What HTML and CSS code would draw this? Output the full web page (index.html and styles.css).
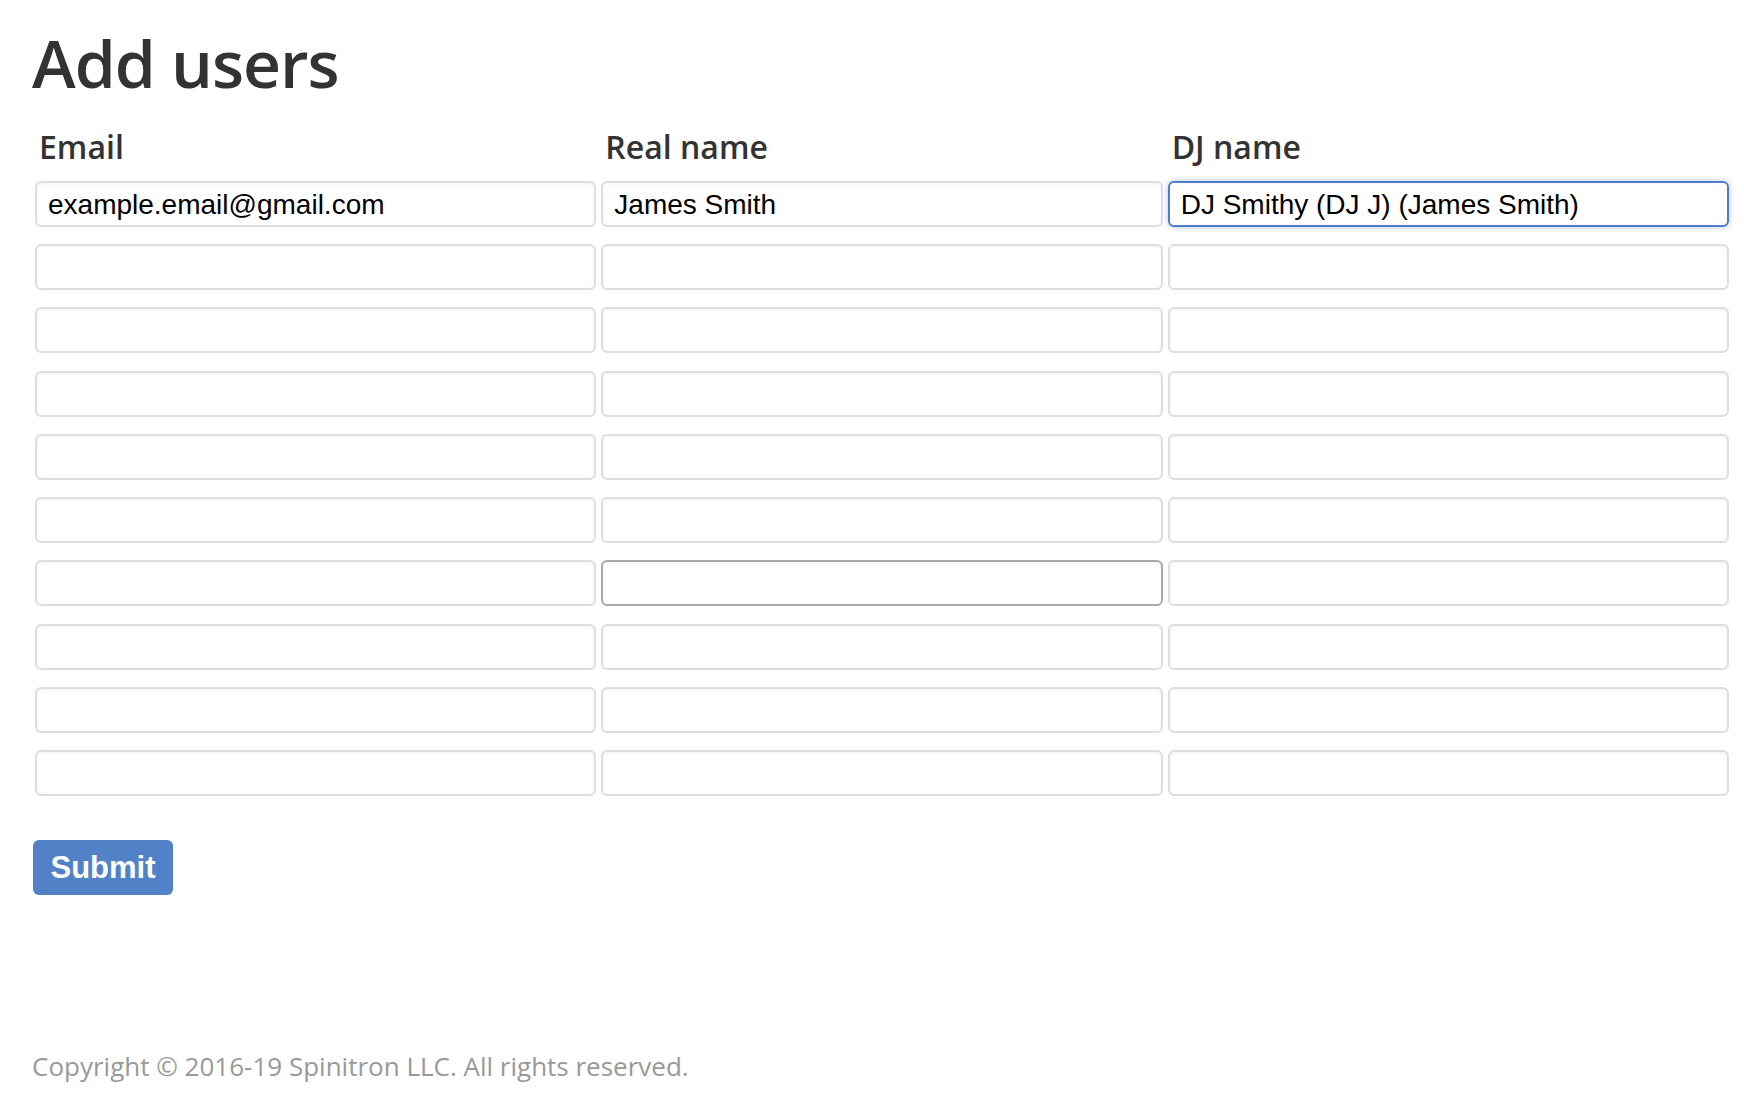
FILE: index.html
```html
<!DOCTYPE html>
<html lang="en">
<head>
<meta charset="utf-8">
<title>Add users</title>
<link rel="stylesheet" href="styles.css">
</head>
<body>
<main class="page">
  <h1 class="title">Add users</h1>
  <form class="user-form">
    <div class="grid">
      <label class="col-label">Email</label>
      <label class="col-label">Real name</label>
      <label class="col-label">DJ name</label>

      <input class="field" type="text" value="example.email@gmail.com">
      <input class="field" type="text" value="James Smith">
      <input class="field is-focused" type="text" value="DJ Smithy (DJ J) (James Smith)">

      <input class="field" type="text"><input class="field" type="text"><input class="field" type="text">
      <input class="field" type="text"><input class="field" type="text"><input class="field" type="text">
      <input class="field" type="text"><input class="field" type="text"><input class="field" type="text">
      <input class="field" type="text"><input class="field" type="text"><input class="field" type="text">
      <input class="field" type="text"><input class="field" type="text"><input class="field" type="text">
      <input class="field" type="text"><input class="field is-hover" type="text"><input class="field" type="text">
      <input class="field" type="text"><input class="field" type="text"><input class="field" type="text">
      <input class="field" type="text"><input class="field" type="text"><input class="field" type="text">
      <input class="field" type="text"><input class="field" type="text"><input class="field" type="text">
    </div>
    <button class="submit" type="button">Submit</button>
  </form>
  <footer class="footer">Copyright © 2016-19 Spinitron LLC. All rights reserved.</footer>
</main>
</body>
</html>
```

FILE: styles.css
```css
html, body {
  margin: 0;
  padding: 0;
  background: #ffffff;
}

.page {
  padding: 26px 15px 0 32px;
  font-family: "Open Sans", "Liberation Sans", sans-serif;
  color: #333333;
}

.title {
  margin: 0 0 30px 0;
  font-size: 66px;
  line-height: 1.1;
  font-weight: 600;
  letter-spacing: -1px;
  color: #333333;
}

.user-form {
  margin: 0;
}

.grid {
  display: grid;
  grid-template-columns: repeat(3, 1fr);
  column-gap: 5px;
  row-gap: 17.25px;
  margin-left: 3px;
}

.col-label {
  display: block;
  padding-left: 4px;
  font-size: 32px;
  line-height: 35px;
  font-weight: 600;
  color: #333333;
}

.field {
  box-sizing: border-box;
  width: 100%;
  height: 46px;
  margin: 0;
  padding: 2px 11px 0 11px;
  border: 2px solid #dedede;
  border-radius: 6px;
  background: #ffffff;
  box-shadow: inset 0 1px 3px rgba(0, 0, 0, 0.06);
  font-family: "Liberation Sans", Arial, sans-serif;
  font-size: 28px;
  color: #000000;
  outline: none;
}

.field.is-focused {
  border-color: #4f7dc6;
  box-shadow: 0 0 6px rgba(79, 125, 198, 0.45);
}

.field.is-hover {
  border-color: #a9a9a9;
}

.submit {
  display: block;
  box-sizing: border-box;
  width: 140px;
  height: 55px;
  margin: 44px 0 0 1px;
  padding: 0;
  border: none;
  border-radius: 6px;
  background: #5181c6;
  color: #ffffff;
  font-family: "Liberation Sans", Arial, sans-serif;
  font-weight: 700;
  font-size: 31px;
  cursor: pointer;
}

.footer {
  margin-top: 154px;
  font-size: 26px;
  line-height: 35px;
  color: #999999;
}
```
